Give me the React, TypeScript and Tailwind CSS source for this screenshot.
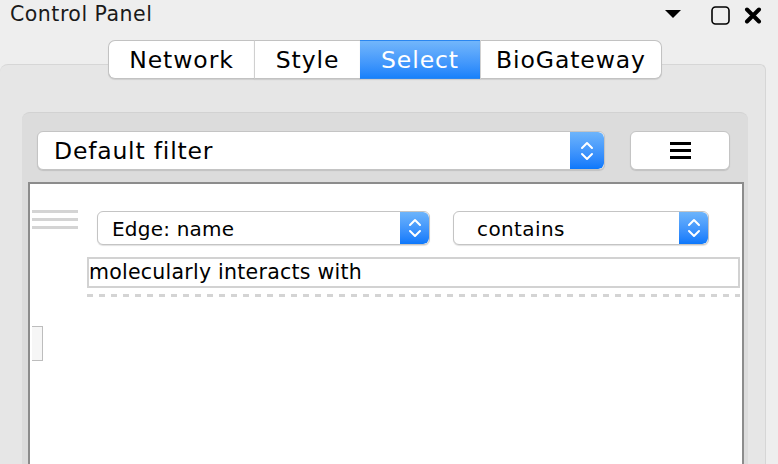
import React from 'react';

// ============================================
// Control Panel - Select tab (filter editor)
// ============================================

const FONT = "font-['DejaVu_Sans',Verdana,sans-serif]";

const Stepper: React.FC<{ w: string }> = ({ w }) => (
  <div
    className={`${w} h-full flex items-center justify-center rounded-r-[6px] bg-gradient-to-b from-[#6db4fb] to-[#0a78fb]`}
  >
    <svg width="14" height="22" viewBox="0 0 14 22" fill="none">
      <path d="M2 8 L7 3 L12 8" stroke="white" strokeWidth="2" strokeLinecap="round" strokeLinejoin="round" />
      <path d="M2 14 L7 19 L12 14" stroke="white" strokeWidth="2" strokeLinecap="round" strokeLinejoin="round" />
    </svg>
  </div>
);

const Combo: React.FC<{ label: string; w: string; h: string; text: string; pad: string; arrow: string }> = ({
  label,
  w,
  h,
  text,
  pad,
  arrow,
}) => (
  <div
    className={`${w} ${h} flex items-stretch rounded-[6px] bg-white border border-[#c4c4c4] shadow-[0_1px_1px_rgba(0,0,0,0.12)] overflow-hidden`}
  >
    <div className={`flex-1 flex items-center ${pad} ${text} text-black`}>{label}</div>
    <Stepper w={arrow} />
  </div>
);

const tabs = ['Network', 'Style', 'Select', 'BioGateway'];
const tabWidths = ['w-[146px]', 'w-[106px]', 'w-[120px]', 'w-[182px]'];

export default function App() {
  return (
    <div className={`w-[778px] h-[464px] bg-[#eeeeee] overflow-hidden ${FONT}`}>
      {/* Title bar */}
      <div className="h-[30px] flex items-center justify-between pl-[10px] pr-[16px]">
        <span className="text-[20.5px] tracking-[0.5px] text-[#1a1a1a] leading-none -mt-[2px]">Control Panel</span>
        <div className="flex items-center">
          <svg width="16" height="10" viewBox="0 0 16 10" className="mr-[30px] -mt-[2px]">
            <path d="M0 1 L16 1 L8 9 Z" fill="#000" />
          </svg>
          <svg width="19" height="19" viewBox="0 0 19 19" className="mr-[14px]">
            <rect x="1" y="1" width="17" height="17" rx="3.5" fill="none" stroke="#000" strokeWidth="1.6" />
          </svg>
          <svg width="18" height="17" viewBox="0 0 18 17">
            <path d="M3 2.5 L15 14.5 M15 2.5 L3 14.5" stroke="#000" strokeWidth="4" strokeLinecap="round" />
          </svg>
        </div>
      </div>

      {/* Tabs */}
      <div className="relative z-10 flex pl-[108px] mt-[10px]">
        {tabs.map((t, i) => {
          const active = t === 'Select';
          const first = i === 0;
          const last = i === tabs.length - 1;
          return (
            <div
              key={t}
              className={`${tabWidths[i]} h-[39px] flex items-center justify-center text-[23.5px] tracking-[0.9px] pt-[2px] border-y ${
                first ? 'border-l rounded-l-[7px]' : ''
              } ${last ? 'border-r rounded-r-[7px]' : ''} ${
                i > 0 && !active ? 'border-l border-l-[#d0d0d0]' : ''
              } ${
                active
                  ? 'bg-gradient-to-b from-[#72b6fb] to-[#1681fb] text-white border-[#2a86f0]'
                  : 'bg-white text-black border-[#c2c2c2]'
              } shadow-[0_1px_1px_rgba(0,0,0,0.1)]`}
            >
              {t}
            </div>
          );
        })}
      </div>

      {/* Outer panel */}
      <div className="w-[766px] h-[420px] -mt-[15px] bg-[#e6e6e6] border-t border-r border-[#d6d6d6] rounded-tl-[8px] rounded-tr-[6px] pt-[47px] pl-[22px]">
        {/* Inner panel */}
        <div className="w-[726px] h-[400px] bg-[#dcdcdc] rounded-t-[8px] border-t border-[#d2d2d2] pt-[18px]">
          <div className="flex items-center pl-[15px]">
            <Combo
              label="Default filter"
              w="w-[568px]"
              h="h-[39px]"
              text="text-[23.5px] tracking-[0.8px] pt-[2px]"
              pad="pl-[16px]"
              arrow="w-[34px]"
            />
            <div className="ml-[25px] w-[100px] h-[39px] rounded-[6px] bg-white border border-[#c4c4c4] shadow-[0_1px_1px_rgba(0,0,0,0.12)] flex items-center justify-center">
              <div className="flex flex-col gap-[4px]">
                <div className="w-[21px] h-[3px] bg-black" />
                <div className="w-[21px] h-[3px] bg-black" />
                <div className="w-[21px] h-[3px] bg-black" />
              </div>
            </div>
          </div>

          {/* Filter editor area */}
          <div className="ml-[6px] mt-[12px] w-[716px] h-[300px] bg-white border-t-2 border-x-[2px] border-[#8c8c8c]">
            <div className="flex items-start pt-[26px]">
              <div className="ml-[2px] w-[46px] flex flex-col gap-[5px]">
                <div className="h-[3px] bg-[#d4d4d4]" />
                <div className="h-[3px] bg-[#d4d4d4]" />
                <div className="h-[3px] bg-[#d4d4d4]" />
              </div>
              <div className="flex items-center ml-[19px] mt-[1px]">
                <Combo
                  label="Edge: name"
                  w="w-[333px]"
                  h="h-[34px]"
                  text="text-[20px] tracking-[0.2px] pt-[1px]"
                  pad="pl-[14px]"
                  arrow="w-[29px]"
                />
                <div className="ml-[23px]">
                  <Combo
                    label="contains"
                    w="w-[256px]"
                    h="h-[34px]"
                    text="text-[20px] tracking-[0.4px] pt-[1px]"
                    pad="pl-[23px]"
                    arrow="w-[29px]"
                  />
                </div>
              </div>
            </div>

            <div className="ml-[57px] mt-[12px] w-[653px] h-[31px] border-2 border-[#d2d2d2] flex items-center text-[20.5px] tracking-[0.25px] text-black">
              molecularly interacts with
            </div>
            <div className="ml-[57px] mt-[6px] w-[653px] h-[3px] bg-[repeating-linear-gradient(90deg,#d4d4d4_0px,#d4d4d4_6px,transparent_6px,transparent_12px)]" />

            <div className="ml-[2px] mt-[29px] w-[11px] h-[35px] bg-[#f6f6f6] border border-[#bdbdbd] border-l-0" />
          </div>
        </div>
      </div>
    </div>
  );
}
